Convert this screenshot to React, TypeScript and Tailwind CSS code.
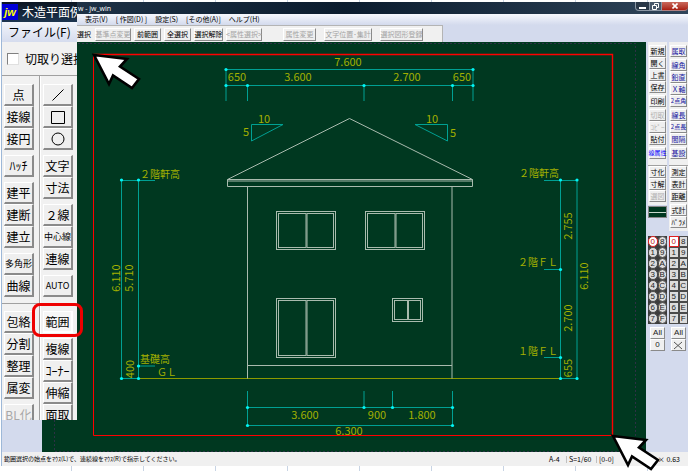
import type { ReactNode } from 'react';
import clsx from 'clsx';

interface Tool {
  name: string;
  face?: ReactNode;
  small?: boolean;
  disabled?: boolean;
  pressed?: boolean;
  tone?: 'blue' | 'bright';
}

const bevel =
  'border border-t-white border-l-white border-r-[#8a8a8a] border-b-[#8a8a8a] bg-[#efefef] whitespace-nowrap';

const slash = (
  <svg className="size-4" viewBox="0 0 16 16" stroke="#000" fill="none">
    <path d="M2.5 13.5L13.5 2.5" />
  </svg>
);
const square = (
  <svg className="size-4" viewBox="0 0 16 16" stroke="#000" fill="none">
    <path d="M1.5 2.5h13v12h-13z" />
  </svg>
);
const circle = (
  <svg className="size-4" viewBox="0 0 16 16" stroke="#000" fill="none">
    <circle cx="8" cy="8" r="6" />
  </svg>
);

const drawLeft: Tool[][] = [
  [{ name: '点' }, { name: '接線' }, { name: '接円' }],
  [{ name: 'ﾊｯﾁ' }],
  [{ name: '建平' }, { name: '建断' }, { name: '建立' }],
  [{ name: '多角形', small: true }, { name: '曲線' }],
];
const drawRight: Tool[][] = [
  [
    { name: '線', face: slash },
    { name: '矩形', face: square },
    { name: '円', face: circle },
  ],
  [{ name: '文字' }, { name: '寸法' }],
  [{ name: '２線' }, { name: '中心線', small: true }, { name: '連線' }],
  [{ name: 'AUTO', small: true }],
];
const editLeft: Tool[][] = [
  [{ name: '包絡' }, { name: '分割' }, { name: '整理' }, { name: '属変' }],
  [{ name: 'BL化', disabled: true }],
];
const editRight: Tool[][] = [
  [{ name: '範囲', pressed: true }],
  [{ name: '複線' }, { name: 'ｺｰﾅｰ' }, { name: '伸縮' }, { name: '面取' }],
];

function ToolColumn({ groups }: { groups: Tool[][] }) {
  return (
    <div className="flex w-[30px] flex-col gap-[5px]">
      {groups.map((group, i) => (
        <div key={i} className="flex flex-col">
          {group.map(tool => (
            <button
              key={tool.name}
              type="button"
              aria-label={tool.face ? tool.name : undefined}
              disabled={tool.disabled}
              className={clsx(
                'flex h-[22px] items-center justify-center border-r-2 border-b-2',
                bevel,
                tool.small ? 'text-[9px]' : 'text-[12px]',
                tool.disabled ? 'text-[#a8a8a8]' : 'text-black',
                tool.pressed &&
                  'border-t-[#707070] border-l-[#707070] border-r-white border-b-white bg-[#f6f6f6]'
              )}
            >
              {tool.face ?? tool.name}
            </button>
          ))}
        </div>
      ))}
    </div>
  );
}

/* Enlarged view of the left tool bars */
function ToolInset() {
  return (
    <div className="absolute top-[2px] left-[2px] h-[418px] w-[75px] overflow-hidden bg-[#f1f1f1] text-black">
      <div className="flex h-5 items-center gap-1 bg-linear-to-b from-[#0b1522] to-[#1d3550] whitespace-nowrap text-white">
        <span className="flex h-4 w-4 shrink-0 items-center justify-center bg-[#0000d8] font-['Liberation_Sans'] text-[11px] leading-4 font-bold text-[#ffff00] italic">
          jw
        </span>
        <span className="text-[12px]">木造平面例</span>
      </div>
      <div className="flex h-5 items-center bg-linear-to-b from-[#f3f5fb] to-[#d5dcee] pl-[6px] text-[12px] whitespace-nowrap">
        ファイル(F)
      </div>
      <label className="flex h-[34px] items-center gap-[6px] border-b border-[#a0a0a0] pl-[5px] text-[12px] whitespace-nowrap">
        <input
          type="checkbox"
          className="size-3 shrink-0 appearance-none border border-t-[#808080] border-r-[#e0e0e0] border-b-[#e0e0e0] border-l-[#808080] bg-white"
        />
        切取り選択
      </label>
      <div className="flex">
        <div className="border-r border-[#a0a0a0] pt-2 pr-[5px] pb-[6px] pl-[2px]">
          <ToolColumn groups={drawLeft} />
        </div>
        <div className="border-l border-white pt-2 pl-[2px]">
          <ToolColumn groups={drawRight} />
        </div>
      </div>
      <div className="flex border-t border-[#a0a0a0]">
        <div className="border-r border-[#a0a0a0] pt-[7px] pr-[5px] pl-[2px]">
          <ToolColumn groups={editLeft} />
        </div>
        <div className="border-l border-white pt-[7px] pl-[2px]">
          <ToolColumn groups={editRight} />
        </div>
      </div>
    </div>
  );
}

function Dots({ points }: { points: [number, number][] }) {
  return (
    <g fill="#00f5f5">
      {points.map(([x, y]) => (
        <circle key={`${x}-${y}`} cx={x} cy={y} r="1.6" />
      ))}
    </g>
  );
}

interface LabelProps {
  x: number;
  y: number;
  upright?: boolean;
  children: string;
}

/* Dimension value centred on x, y */
function Value({ x, y, upright, children }: LabelProps) {
  return (
    <text
      x={x}
      y={y}
      dy="4"
      textAnchor="middle"
      fontSize="11"
      transform={upright ? `rotate(-90 ${x} ${y})` : undefined}
    >
      {children}
    </text>
  );
}

function Level({ x, y, children }: LabelProps) {
  return (
    <text x={x} y={y} fontSize="10">
      {children}
    </text>
  );
}

function Sash({ x, y, w, h }: { x: number; y: number; w: number; h: number }) {
  const half = w / 2;
  return (
    <g>
      <rect x={x} y={y} width={w} height={h} />
      <rect x={x + 2} y={y + 2} width={half - 2} height={h - 4} />
      <rect x={x + half + 1} y={y + 2} width={half - 3} height={h - 4} />
    </g>
  );
}

function Elevation() {
  return (
    <svg
      className="block h-full w-full"
      viewBox="42 42 604 410"
      role="img"
      aria-label="立面図"
      fill="none"
    >
      {/* paper frame */}
      <path d="M54.5 43.5H635.5V451.5H54.5Z" stroke="#5a2a6a" strokeDasharray="1 3" />
      {/* selection */}
      <path d="M93.5 54.5H612.5V435.5H93.5Z" stroke="#ff0000" />
      <path d="M93.5 54.5H612.5V435.5" stroke="#ff0000" strokeWidth="1.4" />

      {/* ground line */}
      <path d="M138.5 378.5H560.5" stroke="#8c9a00" />

      {/* house */}
      <g stroke="#a9bbae">
        <path d="M227.5 179.5L349.5 118.5L472.5 179.5" />
        <path d="M227.5 179.5H472.5V186.5H227.5ZM227 181H473" />
        <path d="M247.5 186.5V378.5M452 186.5V378.5M247.5 365.5H452" />
        <Sash x={276.5} y={211.5} w={59} h={38} />
        <Sash x={365.5} y={211.5} w={59} h={38} />
        <Sash x={276.5} y={298.5} w={59} h={59} />
        <Sash x={392.5} y={298.5} w={30} h={23} />
      </g>

      {/* dimension lines */}
      <g stroke="#00a093">
        <path d="M226 69.5H473M226 85.5H473M226 69.5V101M473 69.5V101M247.5 85.5V101M364 85.5V101M452.5 85.5V101" />
        <path d="M251.5 124.5H283L251.5 141Z" />
        <path d="M447.5 124.5H415L447.5 141Z" />
        <path d="M121.5 180.5H155M121.5 180.5V378.5H138.5M138.5 180.5V378.5M138.5 366H155" />
        <path d="M544 180.5H577V378.5H560.5V180.5M544 269.5H560.5M544 357.5H560.5" />
        <path d="M247.5 391V425.5H452.5V391M247.5 407.5H452.5M364 391V407.5M392.5 391V407.5" />
      </g>
      <Dots
        points={[
          [226, 69.5],
          [473, 69.5],
          [226, 85.5],
          [247.5, 85.5],
          [364, 85.5],
          [452.5, 85.5],
          [473, 85.5],
          [121.5, 180],
          [138.5, 180],
          [138.5, 366],
          [121.5, 378.5],
          [138.5, 378.5],
          [560.5, 180],
          [577, 180],
          [560.5, 269.5],
          [560.5, 357.5],
          [560.5, 378.5],
          [577, 378.5],
          [247.5, 407.5],
          [364, 407.5],
          [392.5, 407.5],
          [452.5, 407.5],
          [247.5, 425.5],
          [452.5, 425.5],
        ]}
      />

      <g fill="#a3b000">
        <Value x={348} y={62}>7.600</Value>
        <Value x={237} y={77}>650</Value>
        <Value x={298} y={77}>3.600</Value>
        <Value x={407} y={77}>2.700</Value>
        <Value x={462} y={77}>650</Value>
        <Value x={264} y={119}>10</Value>
        <Value x={246} y={132}>5</Value>
        <Value x={432} y={119}>10</Value>
        <Value x={453} y={133}>5</Value>
        <Value x={116} y={278} upright>6.110</Value>
        <Value x={129} y={278} upright>5.710</Value>
        <Value x={130} y={369} upright>400</Value>
        <Value x={568} y={226} upright>2.755</Value>
        <Value x={568} y={318} upright>2.700</Value>
        <Value x={568} y={368} upright>655</Value>
        <Value x={584} y={276} upright>6.110</Value>
        <Value x={305} y={415}>3.600</Value>
        <Value x={377} y={415}>900</Value>
        <Value x={422} y={415}>1.800</Value>
        <Value x={349} y={431}>6.300</Value>
        <Level x={140} y={178}>２階軒高</Level>
        <Level x={140} y={363}>基礎高</Level>
        <Level x={157} y={376}>ＧＬ</Level>
        <Level x={519} y={177}>２階軒高</Level>
        <Level x={518} y={266}>２階ＦＬ</Level>
        <Level x={518} y={355}>１階ＦＬ</Level>
      </g>
    </svg>
  );
}

const sideFile: Tool[][] = [
  [{ name: '新規' }, { name: '開く' }, { name: '上書' }, { name: '保存' }],
  [{ name: '印刷' }],
  [{ name: '切取', disabled: true }, { name: 'ｺﾋﾟｰ', disabled: true }, { name: '貼付' }],
  [{ name: '線属性', tone: 'bright', small: true }],
];
const sideMeasure: Tool[][] = [
  [{ name: '属取', tone: 'blue' }],
  [
    { name: '線角', tone: 'blue' },
    { name: '鉛直', tone: 'blue' },
    { name: 'Ｘ軸', tone: 'blue' },
    { name: '2点角', tone: 'blue', small: true },
  ],
  [
    { name: '線長', tone: 'blue' },
    { name: '2点長', tone: 'blue', small: true },
    { name: '間隔', tone: 'blue' },
  ],
  [{ name: '基設', tone: 'blue' }],
];
const sideConvert: Tool[][] = [
  [{ name: '寸化' }, { name: '寸解' }, { name: '選図', disabled: true }],
];
const sideCalc: Tool[][] = [
  [{ name: '測定' }, { name: '表計' }, { name: '距離' }],
  [{ name: '式計' }, { name: 'ﾊﾟﾗﾒ' }],
];

function SideButtons({ groups }: { groups: Tool[][] }) {
  return (
    <div className="flex flex-col gap-[2px]">
      {groups.map((group, i) => (
        <div key={i} className="flex flex-col">
          {group.map(tool => (
            <button
              key={tool.name}
              type="button"
              disabled={tool.disabled}
              className={clsx(
                'flex h-3 items-center justify-center leading-none',
                bevel,
                tool.small ? 'text-[6px]' : 'text-[7px]',
                tool.disabled && 'text-[#b0b0b0]',
                tool.tone === 'blue' && 'text-[#1414a0]',
                tool.tone === 'bright' && 'text-[#0000ff]',
                !tool.tone && !tool.disabled && 'text-black'
              )}
            >
              {tool.name}
            </button>
          ))}
        </div>
      ))}
    </div>
  );
}

const layers = ['0', '8', '1', '9', '2', 'A', '3', 'B', '4', 'C', '5', 'D', '6', 'E', '7', 'F'];

function LayerPad({ round, last }: { round?: boolean; last: ReactNode }) {
  return (
    <div className="flex flex-col font-['Liberation_Sans'] text-[8px] text-[#222]">
      <div className="grid grid-cols-2 bg-[#3c3c3c]">
        {layers.map(layer => (
          <button
            key={layer}
            type="button"
            className={clsx(
              'flex h-[11px] items-center justify-center border leading-none',
              layer === '0'
                ? 'border-[#e02020] bg-white text-[#c01010]'
                : 'border-[#4a4a4a] bg-[#dcdcdc]',
              round && 'rounded-full'
            )}
          >
            {layer}
          </button>
        ))}
      </div>
      <div className="flex flex-col px-[2px] pt-[3px]">
        <button type="button" className={clsx('h-3 leading-none', bevel)}>
          All
        </button>
        <button type="button" className={clsx('flex h-3 items-center justify-center leading-none', bevel)}>
          {last}
        </button>
      </div>
    </div>
  );
}

function SideBars() {
  return (
    <div className="flex w-[42px] shrink-0 justify-between bg-[#d3daed] pl-[2px]">
      <div className="flex w-[19px] flex-col">
        <div className="h-[123px] bg-[#f0f0f0] px-px pt-[3px]">
          <SideButtons groups={sideFile} />
        </div>
        <div className="h-10 border-t border-[#a0a0a0] bg-[#f0f0f0] px-px">
          <SideButtons groups={sideConvert} />
        </div>
        <button
          type="button"
          aria-label="線属性"
          className="mt-px flex h-3 items-center border border-[#888] bg-[#003820]"
        >
          <span className="h-px w-full bg-[#c8d8cc]" />
        </button>
        <div className="pt-[18px]">
          <LayerPad round last="0" />
        </div>
      </div>
      <div className="flex w-[19px] flex-col">
        <div className="h-[123px] bg-[#f0f0f0] px-px pt-[3px]">
          <SideButtons groups={sideMeasure} />
        </div>
        <div className="h-[66px] border-t border-[#a0a0a0] bg-[#f0f0f0] px-px">
          <SideButtons groups={sideCalc} />
        </div>
        <div className="pt-[5px]">
          <LayerPad
            last={
              <svg className="size-[9px]" viewBox="0 0 9 9" stroke="#555" fill="none">
                <path d="M0 1L8 8M8 1L0 8" />
              </svg>
            }
          />
        </div>
      </div>
    </div>
  );
}

const menus = ['表示(V)', '[ 作図(D) ]', '設定(S)', '[その他(A)]', 'ヘルプ(H)'];

function CommandButton({ disabled, width, children }: { disabled?: boolean; width: string; children: string }) {
  return (
    <button
      type="button"
      disabled={disabled}
      className={clsx(
        'flex h-[13px] items-center justify-center leading-none',
        bevel,
        width,
        disabled ? 'text-[#a4a4a4]' : 'text-black'
      )}
    >
      {children}
    </button>
  );
}

function CellStrip() {
  return (
    <div className="flex flex-1 overflow-hidden bg-white">
      {Array.from({ length: 20 }, (_, i) => (
        <span key={i} className="w-[72px] shrink-0 border-r border-[#c8d4e4]" />
      ))}
    </div>
  );
}

function Pointer({ className }: { className: string }) {
  return (
    <svg className={clsx('absolute h-[37px] w-[49px]', className)} viewBox="0 0 49 37">
      <path
        d="M2 2L35 6L28 13.5L47 26L40 35L21 22.5L17 31Z"
        fill="#fff"
        stroke="#000"
        strokeWidth="2.6"
      />
    </svg>
  );
}

export default function App() {
  return (
    <div className="relative flex h-screen flex-col overflow-hidden bg-white font-['Noto_Sans_CJK_JP',sans-serif]">
      <div className="flex h-[2px] shrink-0">
        <CellStrip />
      </div>
      <div className="ml-px flex min-h-0 flex-1 flex-col border-l border-[#9db8d8]">
        {/* title bar */}
        <div className="flex h-3 shrink-0 items-center justify-between bg-linear-to-r from-[#24384c] via-[#0b1c2e] to-[#30455a] pl-[76px] text-white">
          <span className="font-['Open_Sans'] text-[7px] leading-none">w - jw_win</span>
          <div className="flex h-full pb-[3px]">
            <button
              type="button"
              aria-label="最小化"
              className="flex w-[15px] items-end justify-center rounded-bl-sm border border-t-0 border-[#8b97a5] bg-[#2a3848] pb-px"
            >
              <span className="h-[2px] w-[7px] bg-white" />
            </button>
            <button
              type="button"
              aria-label="元に戻す"
              className="flex w-3 items-center justify-center border-r border-b border-[#8b97a5] bg-[#46566a]"
            >
              <svg className="size-[7px]" viewBox="0 0 7 7" stroke="#fff" fill="none">
                <path d="M.5 2.5h4v4h-4zM2.5 2.5v-2h4v4h-2" />
              </svg>
            </button>
            <button
              type="button"
              aria-label="閉じる"
              className="flex w-[26px] items-center justify-center rounded-br-sm border-b border-[#b08080] bg-linear-to-b from-[#c9685c] to-[#a81c10]"
            >
              <svg className="size-[6px]" viewBox="0 0 6 6" stroke="#fff" strokeWidth="1.6">
                <path d="M.5 .5L5.5 5.5M5.5 .5L.5 5.5" />
              </svg>
            </button>
          </div>
        </div>

        {/* menu bar */}
        <div className="flex h-[11px] shrink-0 items-center gap-2 bg-linear-to-b from-[#f6f8fd] to-[#d3daed] pl-[83px] text-[7px] leading-none whitespace-nowrap text-black">
          {menus.map(menu => (
            <span key={menu}>{menu}</span>
          ))}
        </div>

        {/* control bar */}
        <div className="flex h-[17px] shrink-0 bg-[#d3daed] text-[7px]">
          <div className="flex w-[441px] items-center gap-[3px] border-t border-r border-[#b4b4b4] bg-[#f0f0f0] pl-[74px] whitespace-nowrap">
            <span className="w-4 pl-px leading-none">選択</span>
            <CommandButton disabled width="w-9">基準点変更</CommandButton>
            <CommandButton width="w-[27px]">前範囲</CommandButton>
            <CommandButton width="w-[27px]">全選択</CommandButton>
            <CommandButton width="w-[29px]">選択解除</CommandButton>
            <CommandButton disabled width="w-9">{'<属性選択>'}</CommandButton>
            <div className="flex gap-2 pl-[18px]">
              <CommandButton disabled width="w-[33px]">属性変更</CommandButton>
              <CommandButton disabled width="w-12">文字位置･集計</CommandButton>
              <CommandButton disabled width="w-[43px]">選択図形登録</CommandButton>
            </div>
          </div>
        </div>

        {/* drawing area */}
        <div className="flex min-h-0 flex-1">
          <div className="w-10 shrink-0 bg-[#d3daed]" />
          <div className="min-w-0 flex-1 bg-[#003820]">
            <Elevation />
          </div>
          <SideBars />
        </div>

        {/* status bar */}
        <div className="flex h-[14px] shrink-0 items-center bg-[#f0f0f0] pr-2 pl-[2px] text-[7px] leading-none whitespace-nowrap text-black">
          <span className="flex-1 text-[6px]">
            範囲選択の始点をﾏｳｽ(L)で、連続線をﾏｳｽ(R)で指示してください。
          </span>
          <span className="w-[17px]">A-4</span>
          <span className="w-[30px] border-l border-[#c0c0c0] pl-[2px]">S=1/60</span>
          <span className="w-[60px] border-l border-[#c0c0c0] pl-[2px]">[0-0]</span>
          <span className="w-6 text-right">× 0.63</span>
        </div>
      </div>
      <div className="flex h-[5px] shrink-0">
        <CellStrip />
      </div>

      <ToolInset />
      <div className="absolute top-[303px] left-[32px] h-[34px] w-[51px] rounded-lg border-3 border-[#ee0000]" />
      <Pointer className="top-[53px] left-[92px]" />
      <Pointer className="right-[28px] bottom-0" />
    </div>
  );
}
